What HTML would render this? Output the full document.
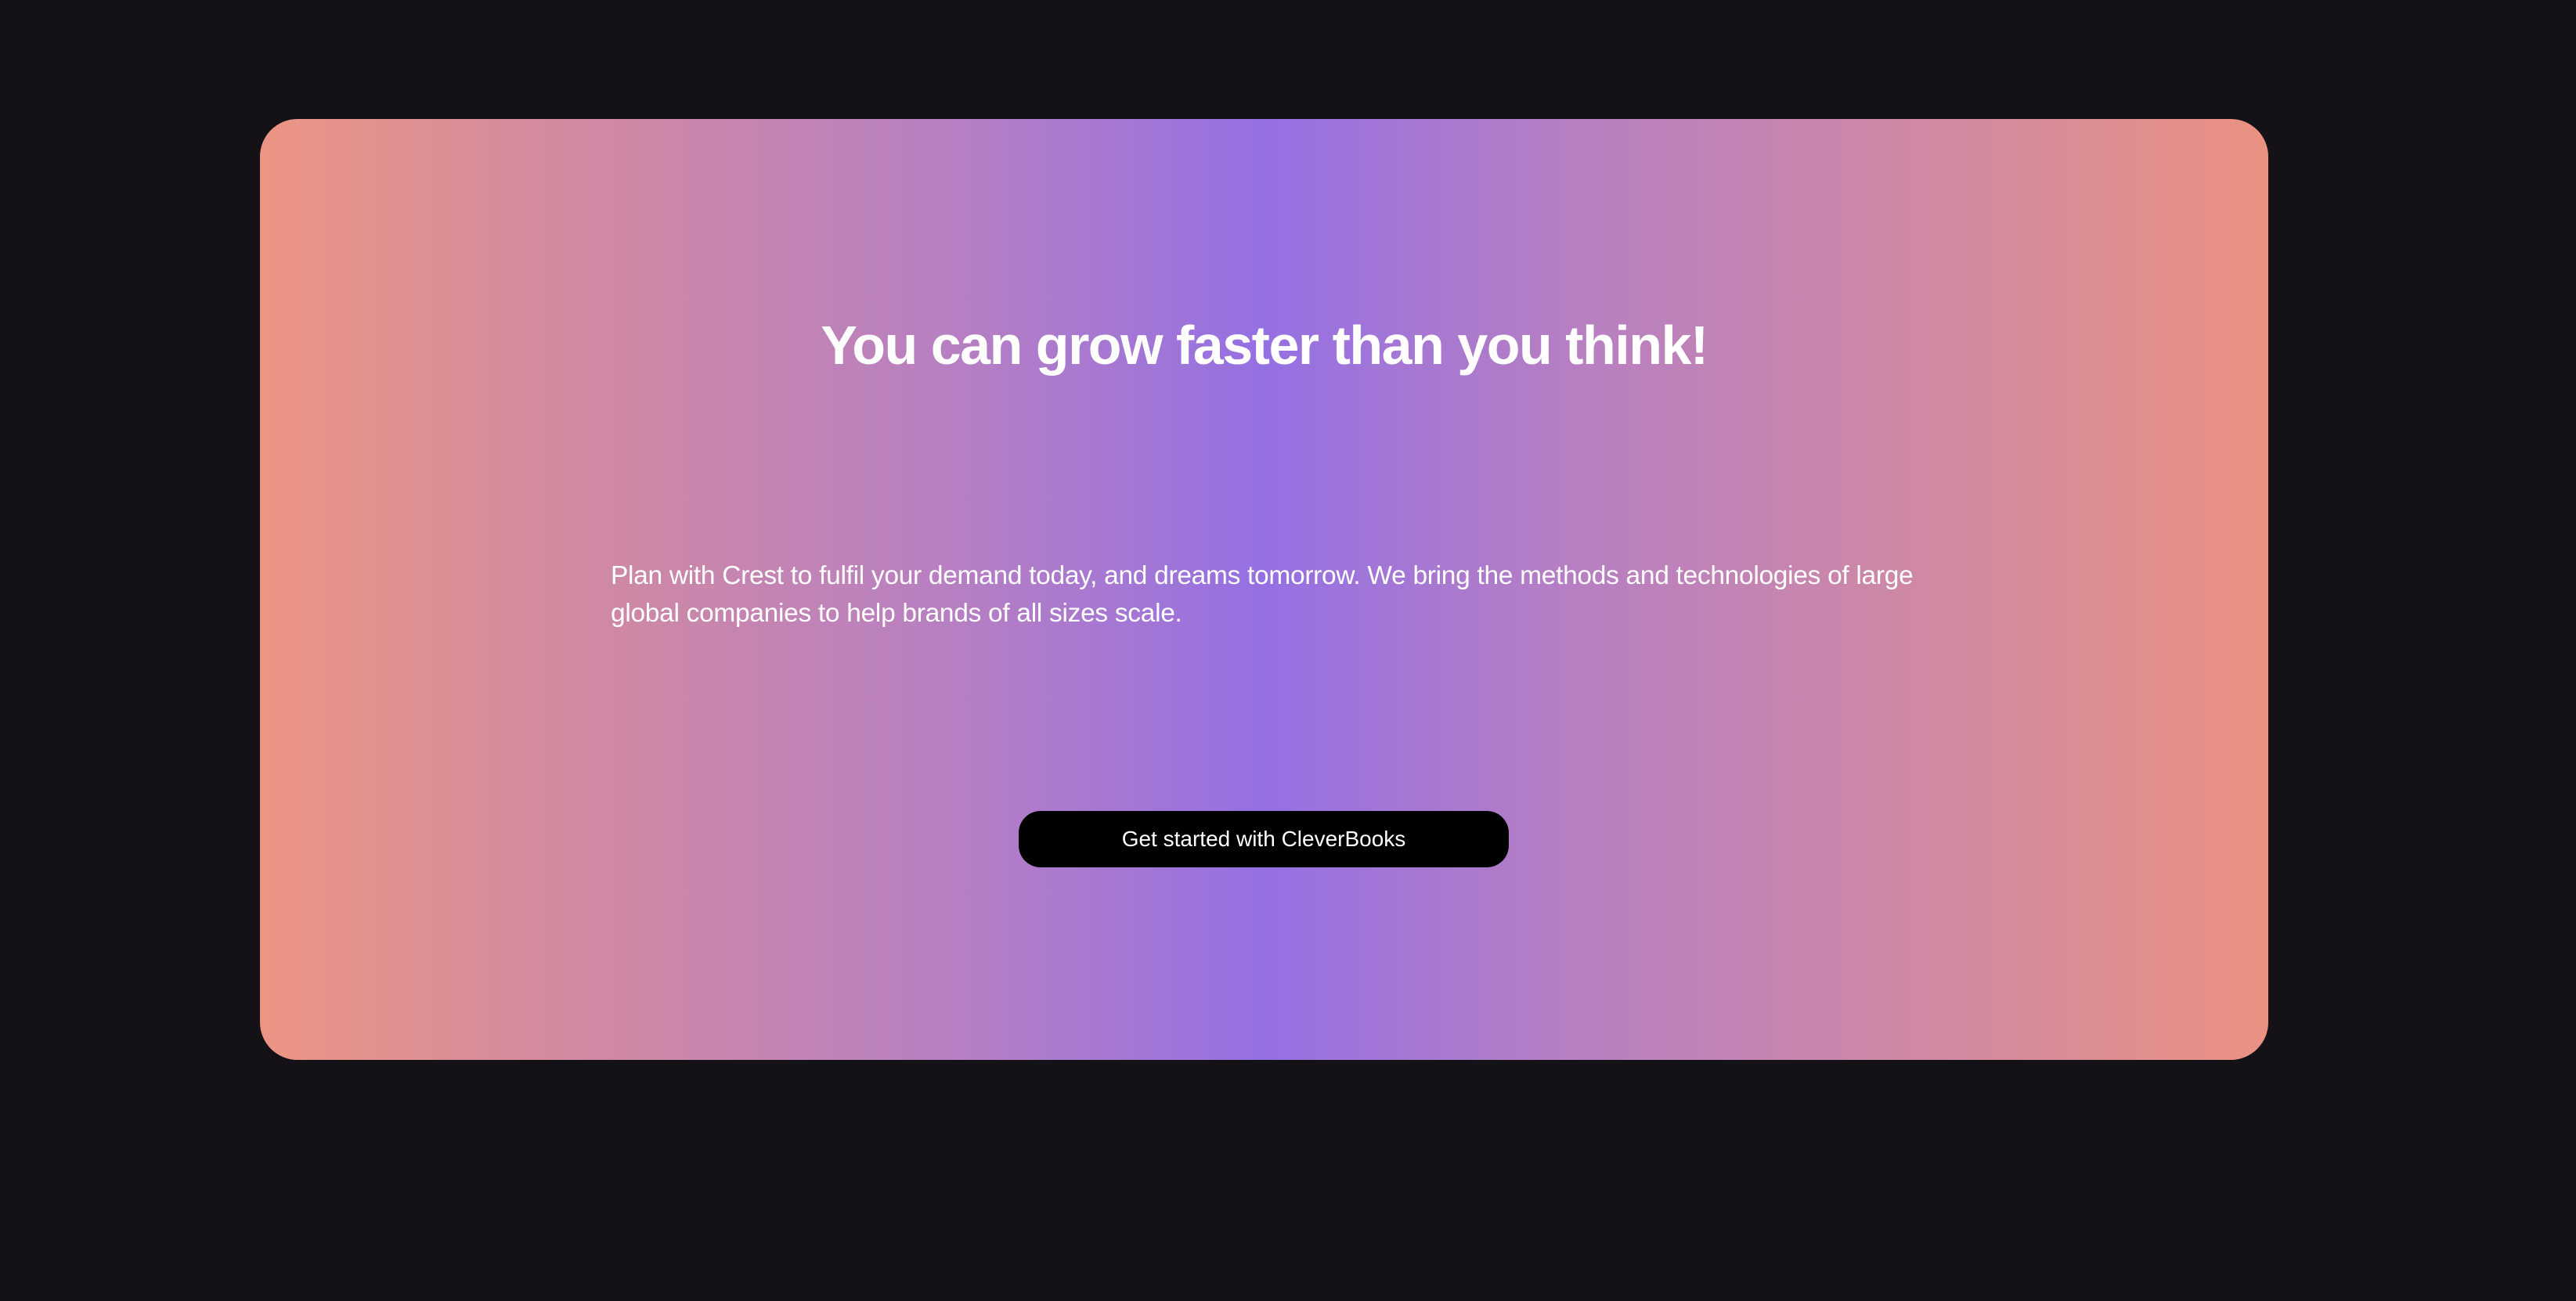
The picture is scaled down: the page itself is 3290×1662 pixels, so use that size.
<!DOCTYPE html>
<html><head><meta charset="utf-8"><style>
html,body{margin:0;padding:0;background:#141217;width:3290px;height:1662px;overflow:hidden;font-family:"Liberation Sans",sans-serif;}
.card{position:absolute;left:332px;top:152px;width:2565px;height:1202px;border-radius:48px;
background:linear-gradient(to right,#ec9584 0%,#d28aa0 15%,#b67fc3 35%,#9570e3 50%,#b67fc3 65%,#d28aa0 85%,#ea9282 100%);}
h1{position:absolute;left:0;width:100%;top:244px;margin:0;text-align:center;color:#fff;font-size:70px;font-weight:bold;letter-spacing:-1.5px;line-height:90px;}
p{position:absolute;left:448px;top:560px;margin:0;color:#fff;font-size:33.5px;line-height:48px;white-space:nowrap;letter-spacing:-0.3px;}
.btn{position:absolute;left:969px;top:884px;width:626px;height:72px;border-radius:28px;background:#000;color:#fff;font-size:28px;line-height:72px;text-align:center;}
</style></head><body>
<div class="card">
<h1>You can grow faster than you think!</h1>
<p>Plan with Crest to fulfil your demand today, and dreams tomorrow. We bring the methods and technologies of large<br>global companies to help brands of all sizes scale.</p>
<div class="btn">Get started with CleverBooks</div>
</div>
</body></html>
